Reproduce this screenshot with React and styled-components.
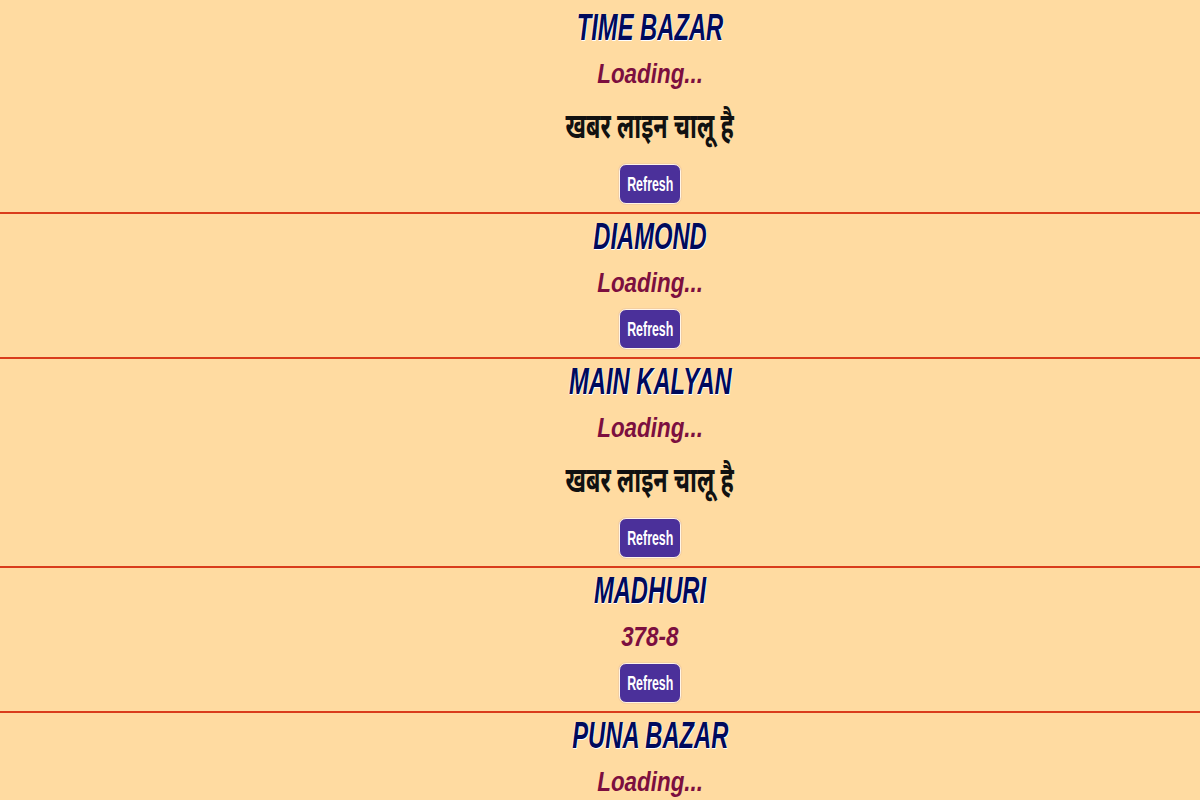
import React from "react";
import styled, { createGlobalStyle } from "styled-components";

const GlobalStyle = createGlobalStyle`
  html, body {
    margin: 0;
    padding: 0;
    background: #ffdba1;
    font-family: "Liberation Sans", Arial, sans-serif;
    overflow: hidden;
  }
`;

const Page = styled.div`
  padding-top: 5px;
  background: #ffdba1;
  min-height: 800px;
`;

const Market = styled.section`
  display: flex;
  flex-direction: column;
  align-items: center;
  padding-left: 100px;
  border-bottom: 2px solid #d93c1c;
  text-align: center;
`;

const Line = styled.div`
  height: ${(p) => p.h}px;
  display: flex;
  align-items: center;
  justify-content: center;
`;

const Squeeze = styled.span`
  display: inline-block;
  white-space: nowrap;
  transform: scaleX(${(p) => p.sx});
`;

const Title = styled(Squeeze)`
  font-size: 36px;
  font-weight: 700;
  font-style: italic;
  color: #000a5c;
  text-shadow: 1px 1px 0 #fff, -1px 0 0 #fff8;
`;

const Result = styled(Squeeze)`
  font-size: 28px;
  font-weight: 700;
  font-style: italic;
  color: #7c0f3f;
`;

const News = styled(Squeeze)`
  font-family: "Noto Sans Devanagari", "Noto Sans", "Lohit Devanagari", "FreeSans", sans-serif;
  font-size: 35px;
  font-weight: 700;
  color: #111;
`;

const RefreshButton = styled.button`
  width: 62px;
  height: 40px;
  margin: 3px 0 8px;
  padding: 0;
  background: #4b309a;
  border: 1px solid #fff4e6;
  border-radius: 7px;
  box-shadow: 0 0 0 1px #f4cfa0;
  color: #fff;
  font-family: "Liberation Sans", Arial, sans-serif;
  font-size: 20px;
  font-weight: 700;
  cursor: pointer;
  display: flex;
  align-items: center;
  justify-content: center;
  overflow: visible;
`;

const markets = [
  { name: "TIME BAZAR", result: "Loading...", news: true },
  { name: "DIAMOND", result: "Loading..." },
  { name: "MAIN KALYAN", result: "Loading...", news: true },
  { name: "MADHURI", result: "378-8" },
  { name: "PUNA BAZAR", result: "Loading..." },
];

export default function App() {
  return (
    <Page>
      <GlobalStyle />
      {markets.map((m) => (
        <Market key={m.name}>
          <Line h={46}>
            <Title sx={0.66}>{m.name}</Title>
          </Line>
          <Line h={46}>
            <Result sx={0.8}>{m.result}</Result>
          </Line>
          {m.news && (
            <Line h={64}>
              <News sx={0.67}>खबर लाइन चालू है</News>
            </Line>
          )}
          <RefreshButton>
            <Squeeze sx={0.62}>Refresh</Squeeze>
          </RefreshButton>
        </Market>
      ))}
    </Page>
  );
}
